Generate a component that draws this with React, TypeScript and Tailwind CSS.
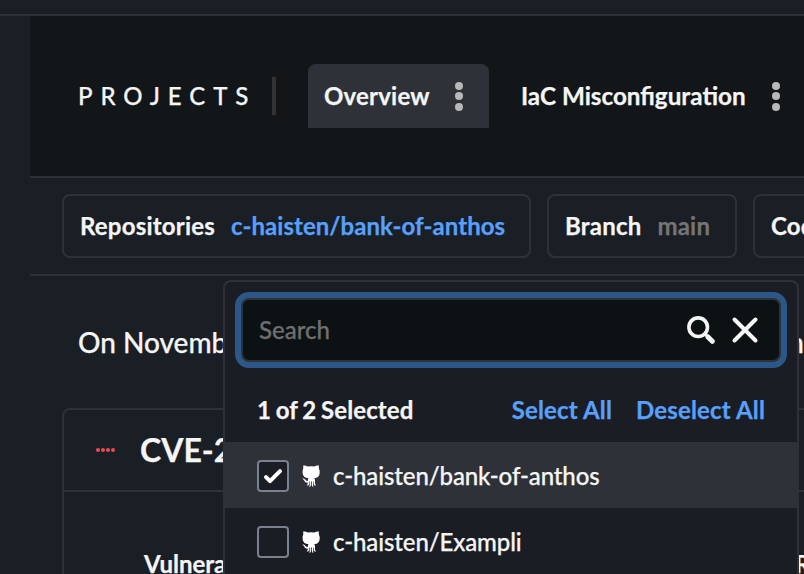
import type { ReactNode } from "react";

function Octocat() {
  return (
    <svg className="mt-0.5 ml-[13px] h-[22px] w-[18px]" viewBox="0 0 18 22" fill="#fff">
      <path d="M1.5 0.2C3.2 0.3 4.4.9 5.5 1.5Q9 1 12.5 1.5C13.6.9 14.8.3 16.5.2Q17.2 2 16.8 3.6Q17.9 5 17.7 7.4C17.5 11.2 15.6 12.7 12.2 13.1Q13 13.8 13 15.4V18.6Q13.1 19.8 14.2 20.4Q12 20.8 11.6 19.3V16.4H11V20Q11 21.2 11.6 21.8Q9.8 21.8 9.8 20.2V16.4H8.9V20.2Q8.9 21.8 7.1 21.8Q7.7 21.2 7.7 20V16.4H7.1V19.3Q6.7 20.8 4.7 20.4Q5.7 19.8 5.7 18.6V17.5C3.8 17.8 2.8 16.7 2.2 15.5Q1.6 14.2.3 13.8C2.4 12.9 3.1 14.8 4 15.6Q4.8 16.2 5.8 15.7Q5.8 13.9 6.6 13.1C2.9 12.7.8 11.2.6 7.4Q.4 5 1.3 3.6Q.9 2 1.5.2Z" />
    </svg>
  );
}

function Kebab() {
  return (
    <span className="flex w-2 flex-col gap-[2.5px]">
      <span className="size-2 rounded-full bg-[#b8b8b8]" />
      <span className="size-2 rounded-full bg-[#b8b8b8]" />
      <span className="size-2 rounded-full bg-[#b8b8b8]" />
    </span>
  );
}

function Filter({ label, children, className }: { label: string; children?: ReactNode; className: string }) {
  return (
    <div className={`flex h-16 shrink-0 items-center rounded-lg border-2 border-[#2e3138] px-4 font-bold ${className}`}>
      <span className="mr-4 tracking-[0.2px]">{label}</span>
      {children}
    </div>
  );
}

function Row({ name, checked }: { name: string; checked?: boolean }) {
  return (
    <div className={`flex h-[66px] items-center pl-8 ${checked ? "bg-[#2e3138]" : ""}`}>
      <span className="mt-0.5 flex size-8 items-center justify-center rounded border-2 border-[#77818f] bg-[#1a1e24]">
        {checked && (
          <svg className="size-5" viewBox="0 0 20 20" fill="none" stroke="#fff" strokeWidth="4" strokeLinecap="round" strokeLinejoin="round">
            <path d="M3 11.2 7 15.2 17 5.2" />
          </svg>
        )}
      </span>
      <Octocat />
      <span className="mt-0.5 ml-[13px] tracking-[-0.11px]">{name}</span>
    </div>
  );
}

export default function App() {
  return (
    <div className="relative flex h-[574px] w-[804px] flex-col overflow-hidden bg-[#1a1e25] font-['Lato',sans-serif] text-2xl font-medium whitespace-nowrap text-[#f5f5f5] [-webkit-text-stroke:0.25px_currentColor]">
      <div className="h-4 shrink-0 border-b-2 border-[#2e3138]" />
      <main className="ml-[30px] flex flex-1 flex-col">
        <header className="flex h-[162px] shrink-0 border-b-2 border-[#2e3138] bg-[#121619] pt-12 pl-12">
          <div className="flex h-16 w-[198px] items-center">
            <span className="w-[194px] tracking-[7.95px]">PROJECTS</span>
            <span className="h-[38px] w-1 shrink-0 bg-[#333]" />
          </div>
          <div className="ml-8 flex h-16 w-[181px] shrink-0 items-center justify-between rounded-t-lg bg-[#2e3138] pr-[26px] pl-4 font-bold">
            <span className="tracking-[0.2px]">Overview</span>
            <Kebab />
          </div>
          <div className="ml-4 flex h-16 w-[307px] shrink-0 items-center justify-between pr-[20px] pl-4 text-[24.25px] font-bold">
            IaC Misconfiguration
            <span className="w-5"><Kebab /></span>
          </div>
        </header>
        <section className="flex h-[98px] shrink-0 gap-4 border-b-2 border-[#2e3138] pt-4 pl-8">
          <Filter label="Repositories" className="w-[469px]">
            <span className="tracking-[0.05px] text-[#58a0fc]">c-haisten/bank-of-anthos</span>
          </Filter>
          <Filter label="Branch" className="w-[190px]">
            <span className="tracking-[0.2px] text-[#757575]">main</span>
          </Filter>
          <Filter label="Code" className="w-[190px]" />
        </section>
        <div className="flex h-[132px] shrink-0 items-center pt-0.5 pl-12 text-[28px]">
          <span className="w-[718px]">On Novemb</span>
          <span>n</span>
        </div>
        <article className="ml-8 w-[900px] flex-1 rounded-t-lg border-x-2 border-t-2 border-[#2e3138]">
          <div className="flex h-[82px] items-center border-b-2 border-[#2e3138] pl-8">
            <span className="flex gap-px">
              <span className="size-1 rounded-full bg-[#ef4a50]" />
              <span className="size-1 rounded-full bg-[#ef4a50]" />
              <span className="size-1 rounded-full bg-[#ef4a50]" />
              <span className="size-1 rounded-full bg-[#ef4a50]" />
            </span>
            <span className="ml-[25px] text-[32px] font-bold">CVE-2</span>
          </div>
          <div className="flex pt-[57px] pl-20 leading-[29px] font-bold">
            <span className="w-[651px]">Vulnera</span>
            <span>R</span>
          </div>
        </article>
      </main>

      <div className="absolute top-[280px] left-[223px] h-[310px] w-[576px] rounded-lg border-2 border-[#2e3138] bg-[#1a1e24]">
        <div className="mx-4 mt-4 flex h-16 w-[540px] items-center rounded-lg border-2 border-[#2e3138] bg-[#0c1114] pr-5 pl-4 ring-6 ring-[#2c5889]">
          <span className="flex-1 text-[#6f6f6f]">Search</span>
          <svg className="size-7" viewBox="0 0 28 28" fill="none" stroke="#f5f5f5">
            <circle cx="11.2" cy="11.2" r="9.3" strokeWidth="3.6" />
            <path d="m18 18 3.5 3.5" strokeWidth="3" />
            <path d="m21 21 4.3 4.3" strokeWidth="5" strokeLinecap="round" />
          </svg>
          <svg className="ml-4 size-7" viewBox="0 0 28 28" fill="none" stroke="#f5f5f5" strokeWidth="4" strokeLinecap="round">
            <path d="m3.5 3.5 21 21m0-21-21 21" />
          </svg>
        </div>
        <div className="flex h-20 items-center pt-4 pr-8 pl-8 font-bold">
          <span className="flex-1 tracking-[0.1px] [word-spacing:-1.2px]">1 of 2 Selected</span>
          <span className="tracking-[0.15px] text-[#58a0fc]">Select All</span>
          <span className="ml-6 tracking-[0.15px] text-[#58a0fc]">Deselect All</span>
        </div>
        <Row name="c-haisten/bank-of-anthos" checked />
        <Row name="c-haisten/Exampli" />
      </div>
    </div>
  );
}
